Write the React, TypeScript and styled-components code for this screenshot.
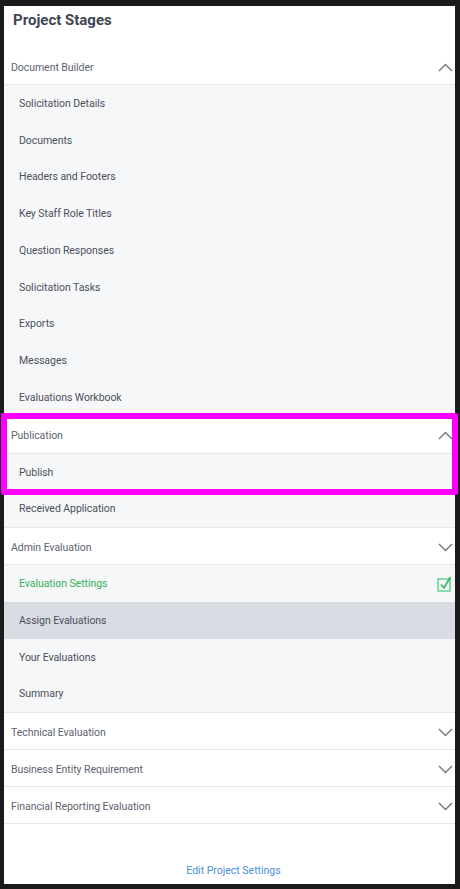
import React from "react";
import styled, { createGlobalStyle } from "styled-components";

const Global = createGlobalStyle`
  html, body { margin: 0; padding: 0; background: #1b1b1b; }
  body { font-family: Roboto, "Open Sans", Arial, sans-serif; }
  #root { background: #1b1b1b; padding: 6px 5px 5px 4px; height: 889px; box-sizing: border-box; }
`;

const Panel = styled.div`
  background: #ffffff;
  height: 878px;
  display: flex;
  flex-direction: column;
`;

const Title = styled.h1`
  margin: 0;
  height: 42px;
  flex-shrink: 0;
  box-sizing: border-box;
  padding: 5px 0 0 9px;
  font-size: 15px;
  font-weight: 700;
  color: #3f4652;
`;

const Section = styled.div`
  position: relative;
  border-bottom: 1px solid #e4e6ea;
  background: #f6f7f9;
`;

const Header = styled.div<{ $open?: boolean }>`
  height: 34px;
  padding: 2px 2px 0 7px;
  display: flex;
  align-items: center;
  justify-content: space-between;
  background: #ffffff;
  border-bottom: ${(p) => (p.$open ? "1px solid #e4e6ea" : "none")};
  font-size: 10.5px;
  letter-spacing: -0.05px;
  color: #5c6370;
`;

const Item = styled.div<{ $active?: boolean; $done?: boolean }>`
  height: 36.75px;
  display: flex;
  align-items: center;
  justify-content: space-between;
  padding: 0 2px 0 15px;
  font-size: 10.5px;
  letter-spacing: -0.05px;
  color: ${(p) => (p.$done ? "#35b257" : "#4b5059")};
  background: ${(p) => (p.$active ? "#d9dde3" : "transparent")};
`;

const Highlight = styled.div`
  position: absolute;
  left: -3px;
  right: -3px;
  top: -4px;
  height: 82px;
  box-sizing: border-box;
  border: 6px solid #ff00ff;
  border-radius: 3px;
  pointer-events: none;
`;

const Footer = styled.div`
  flex: 1;
  display: flex;
  align-items: flex-end;
  justify-content: center;
  padding-bottom: 7px;
`;

const Link = styled.a`
  font-size: 10.5px;
  color: #4a90e2;
  text-decoration: none;
  margin-left: 8px;
`;

const Chevron = ({ up }: { up?: boolean }) => (
  <svg width="15" height="9" viewBox="0 0 15 9" fill="none">
    <path
      d={up ? "M1 8 L7.5 1.5 L14 8" : "M1 1 L7.5 7.5 L14 1"}
      stroke="#6b7380"
      strokeWidth="1.3"
    />
  </svg>
);

const Check = () => (
  <svg width="16" height="16" viewBox="0 0 16 16" fill="none">
    <rect x="1" y="3" width="12" height="12" stroke="#5fd08a" strokeWidth="1.4" />
    <path d="M4 8.5 L7 12 L13.5 1" stroke="#35b257" strokeWidth="1.6" />
  </svg>
);

type Sec = {
  title: string;
  open: boolean;
  items: { label: string; active?: boolean; done?: boolean }[];
  highlight?: boolean;
};

const sections: Sec[] = [
  {
    title: "Document Builder",
    open: true,
    items: [
      "Solicitation Details",
      "Documents",
      "Headers and Footers",
      "Key Staff Role Titles",
      "Question Responses",
      "Solicitation Tasks",
      "Exports",
      "Messages",
      "Evaluations Workbook",
    ].map((label) => ({ label })),
  },
  {
    title: "Publication",
    open: true,
    highlight: true,
    items: [{ label: "Publish" }, { label: "Received Application" }],
  },
  {
    title: "Admin Evaluation",
    open: false,
    items: [
      { label: "Evaluation Settings", done: true },
      { label: "Assign Evaluations", active: true },
      { label: "Your Evaluations" },
      { label: "Summary" },
    ],
  },
  { title: "Technical Evaluation", open: false, items: [] },
  { title: "Business Entity Requirement", open: false, items: [] },
  { title: "Financial Reporting Evaluation", open: false, items: [] },
];

export default function App() {
  return (
    <>
      <Global />
      <Panel>
        <Title>Project Stages</Title>
        {sections.map((s) => (
          <Section key={s.title}>
            <Header $open={s.items.length > 0}>
              <span>{s.title}</span>
              <Chevron up={s.open} />
            </Header>
            {s.items.map((it) => (
              <Item key={it.label} $active={it.active} $done={it.done}>
                <span>{it.label}</span>
                {it.done && <Check />}
              </Item>
            ))}
            {s.highlight && <Highlight />}
          </Section>
        ))}
        <Footer>
          <Link href="#">Edit Project Settings</Link>
        </Footer>
      </Panel>
    </>
  );
}
